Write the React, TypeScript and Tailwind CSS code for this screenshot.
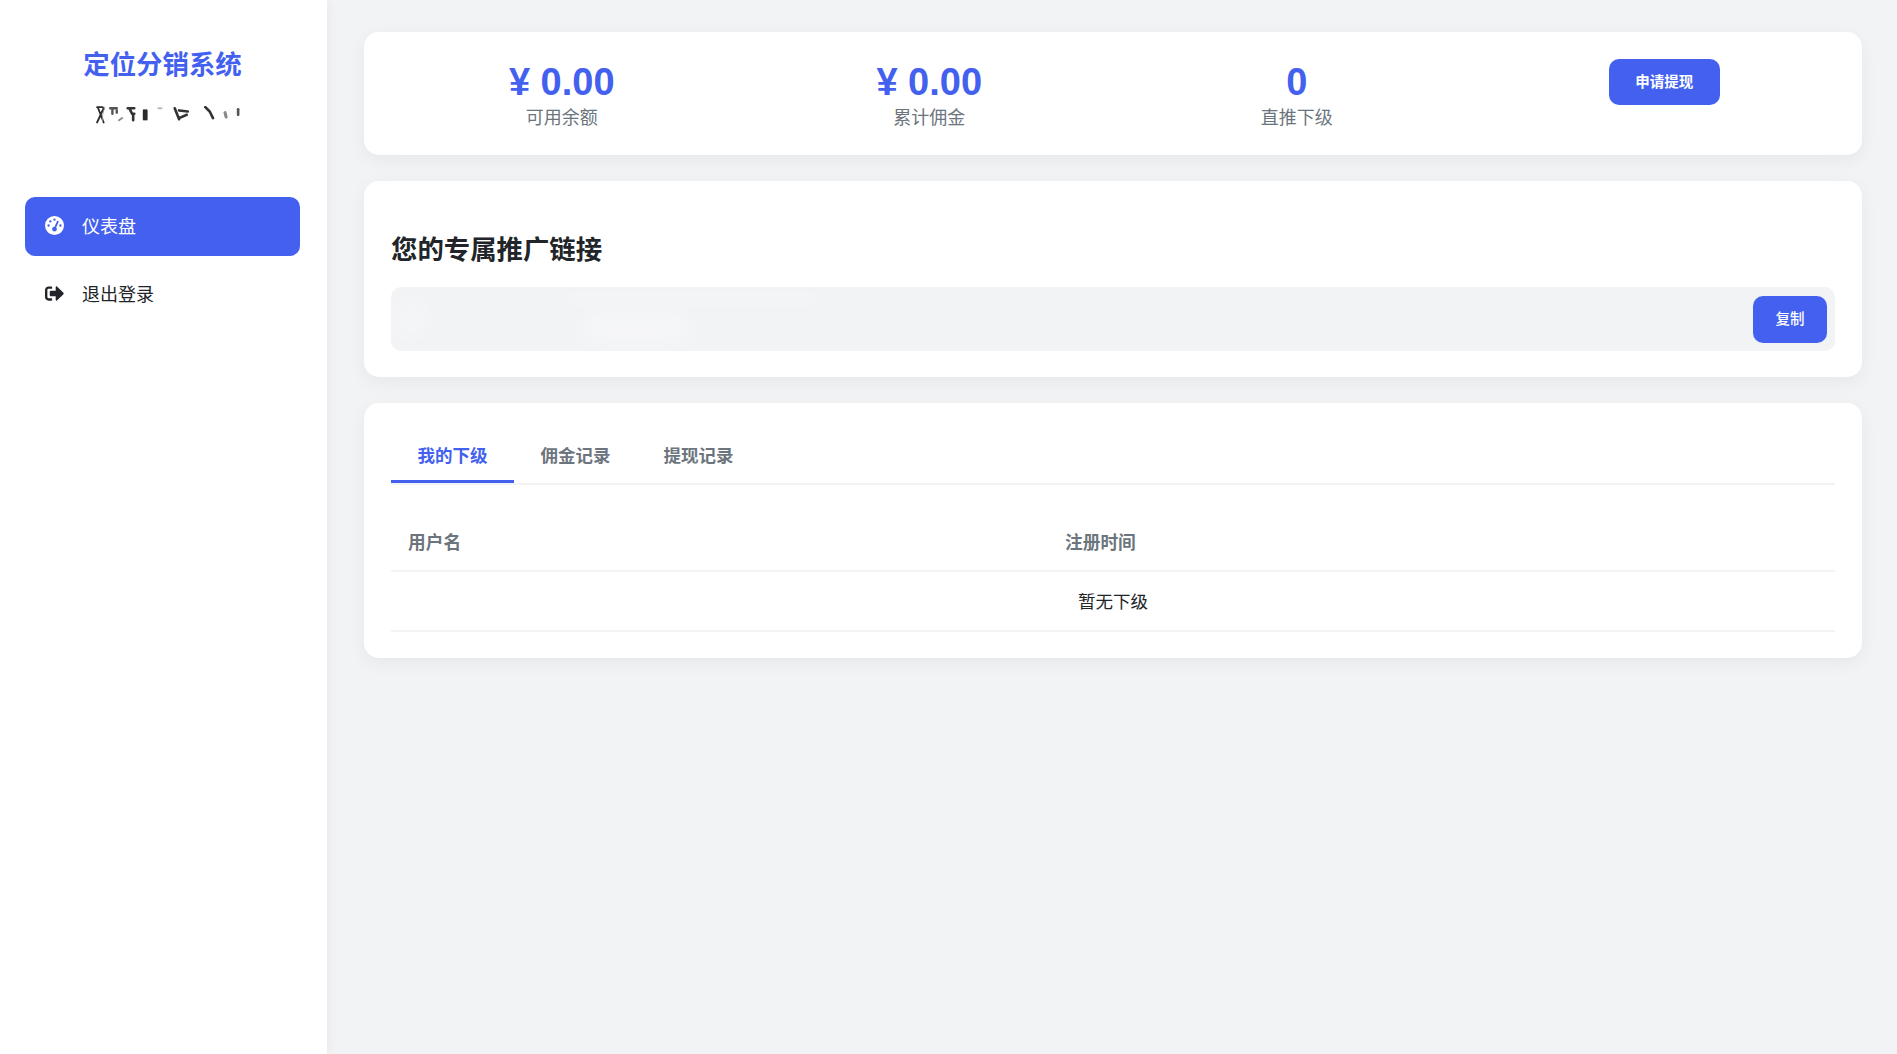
import React from "react";
import { FaSignOutAlt } from "react-icons/fa";
import { FaGaugeHigh } from "react-icons/fa6";

const stats = [
  { value: "¥ 0.00", label: "可用余额" },
  { value: "¥ 0.00", label: "累计佣金" },
  { value: "0", label: "直推下级" },
];

const tabs = ["我的下级", "佣金记录", "提现记录"];

// pixelated username under the title, it is unreadable in the picture
const UserBlur = () => (
  <svg width="164" height="22" viewBox="0 0 150 20" className="mx-auto block blur-[0.4px]" fill="none">
    <g stroke="#2b2b2b" strokeWidth="1.7" strokeLinecap="round">
      <path d="M1 1 H6 M2 2 L7 15 M7 2 L1 15" />
      <path d="M8 1 Q5 8 6 14" stroke="#999" strokeWidth="0.8" />
      <path d="M13 2 H19 M15 3 V7 M19 4 L19 6" strokeWidth="2.2" stroke="#555" />
      <path d="M21 13 L24 11" stroke="#888" />
      <path d="M29 2 H35 M31 3 L33 7 H35 M34 7 V13" strokeWidth="2.4" stroke="#333" />
      <path d="M44 4 V12 M46 4 V12" strokeWidth="2.4" />
      <path d="M57 2 H60" stroke="#bbb" />
      <path d="M72 2 L76 12 M76 4 L84 5 M76 11 L83 8" strokeWidth="2.4" stroke="#333" />
      <path d="M100 1 L104 5 L107 11" strokeWidth="2.4" stroke="#333" />
      <path d="M118 6 L119 10" strokeWidth="2.8" stroke="#888" />
      <path d="M130 3 V8" strokeWidth="2.4" stroke="#555" />
    </g>
  </svg>
);

export default function App() {
  return (
    <div className="flex min-h-screen bg-[#f2f3f5] text-[#212529] font-['Noto_Sans_CJK_SC',sans-serif]">
      <aside className="w-[327px] shrink-0 bg-white shadow-[0_0_12px_rgba(0,0,0,0.06)] px-[25px]">
        <div className="pt-[45px] text-center">
          <h1 className="pr-[2px] text-[26.4px] leading-[36px] font-bold text-[#4361ee]">定位分销系统</h1>
          <div className="mt-[25px] pl-[29px]">
            <UserBlur />
          </div>
        </div>
        <nav className="mt-[69px] flex flex-col gap-[9px] w-[275px]">
          <a className="flex h-[59px] items-center rounded-[10px] bg-[#4361ee] pl-[20px] pb-[2px] text-white text-[18px]">
            <FaGaugeHigh className="w-[19px] h-[19px] mr-[18px]" />
            <span>仪表盘</span>
          </a>
          <a className="flex h-[59px] items-center rounded-[10px] pl-[20px] pb-[2px] text-[#212529] text-[18px]">
            <FaSignOutAlt className="w-[19px] h-[19px] mr-[18px]" />
            <span>退出登录</span>
          </a>
        </nav>
      </aside>

      <main className="flex-1 pl-[37px] pr-[35px] pt-[32px] flex flex-col gap-[26px]">
        <section className="h-[123px] rounded-[15px] bg-white shadow-[0_5px_18px_rgba(0,0,0,0.05)] px-[27px] pt-[26px] grid grid-cols-4 gap-[26px]">
          {stats.map((s, i) => (
            <div key={i} className="text-center">
              <div className="pt-[3px] text-[38px] leading-[43px] font-bold text-[#4361ee] font-['Liberation_Sans','Noto_Sans_CJK_SC',sans-serif]">{s.value}</div>
              <div className="text-[18px] leading-[24px] text-[#6c757d]">{s.label}</div>
            </div>
          ))}
          <div className="text-center pt-[1px]">
            <button className="h-[46px] w-[111px] rounded-[10px] bg-[#4361ee] pb-[2px] text-white text-[14.5px] font-bold">申请提现</button>
          </div>
        </section>

        <section className="h-[196px] rounded-[15px] bg-white shadow-[0_5px_18px_rgba(0,0,0,0.05)] px-[27px] pt-[49px]">
          <h2 className="text-[26.4px] leading-[36px] font-bold">您的专属推广链接</h2>
          <div className="relative mt-[21px] h-[64px] rounded-[10px] bg-[#f2f3f5] flex items-center justify-end pr-[8px] overflow-hidden">
            <div className="absolute left-[8px] top-[14px] h-[36px] w-[24px] rounded-full bg-white/40 blur-md" />
            <div className="absolute left-[170px] top-[8px] h-[8px] w-[260px] rounded-full bg-white/30 blur-sm" />
            <div className="absolute left-[190px] top-[32px] h-[20px] w-[110px] rounded-full bg-white/50 blur-md" />
            <button className="relative h-[47px] w-[74px] rounded-[10px] bg-[#4361ee] pb-[2px] text-white text-[14.5px] font-medium">复制</button>
          </div>
        </section>

        <section className="h-[255px] rounded-[15px] bg-white shadow-[0_5px_18px_rgba(0,0,0,0.05)] px-[27px] pt-[26px]">
          <div className="flex h-[56px] border-b-2 border-[#f2f3f5]">
            {tabs.map((t, i) => (
              <div
                key={t}
                className={
                  i === 0
                    ? "w-[123px] h-[54px] border-b-[3px] border-[#4361ee] text-center text-[17.5px] leading-[52px] font-bold text-[#4361ee]"
                    : "w-[123px] text-center text-[17.5px] leading-[52px] font-bold text-[#6c757d]"
                }
              >
                {t}
              </div>
            ))}
          </div>
          <table className="w-full mt-[26px] border-collapse text-[17.5px]">
            <thead>
              <tr className="border-b-2 border-[#f2f3f5] h-[60px]">
                <th className="w-[657px] px-[17px] pt-[2px] text-left font-bold text-[#6c757d] text-[17.7px]">用户名</th>
                <th className="px-[17px] pt-[2px] text-left font-bold text-[#6c757d] text-[17.7px]">注册时间</th>
              </tr>
            </thead>
            <tbody>
              <tr className="border-b-2 border-[#f2f3f5] h-[60px]">
                <td colSpan={2} className="text-center">暂无下级</td>
              </tr>
            </tbody>
          </table>
        </section>
      </main>
    </div>
  );
}
